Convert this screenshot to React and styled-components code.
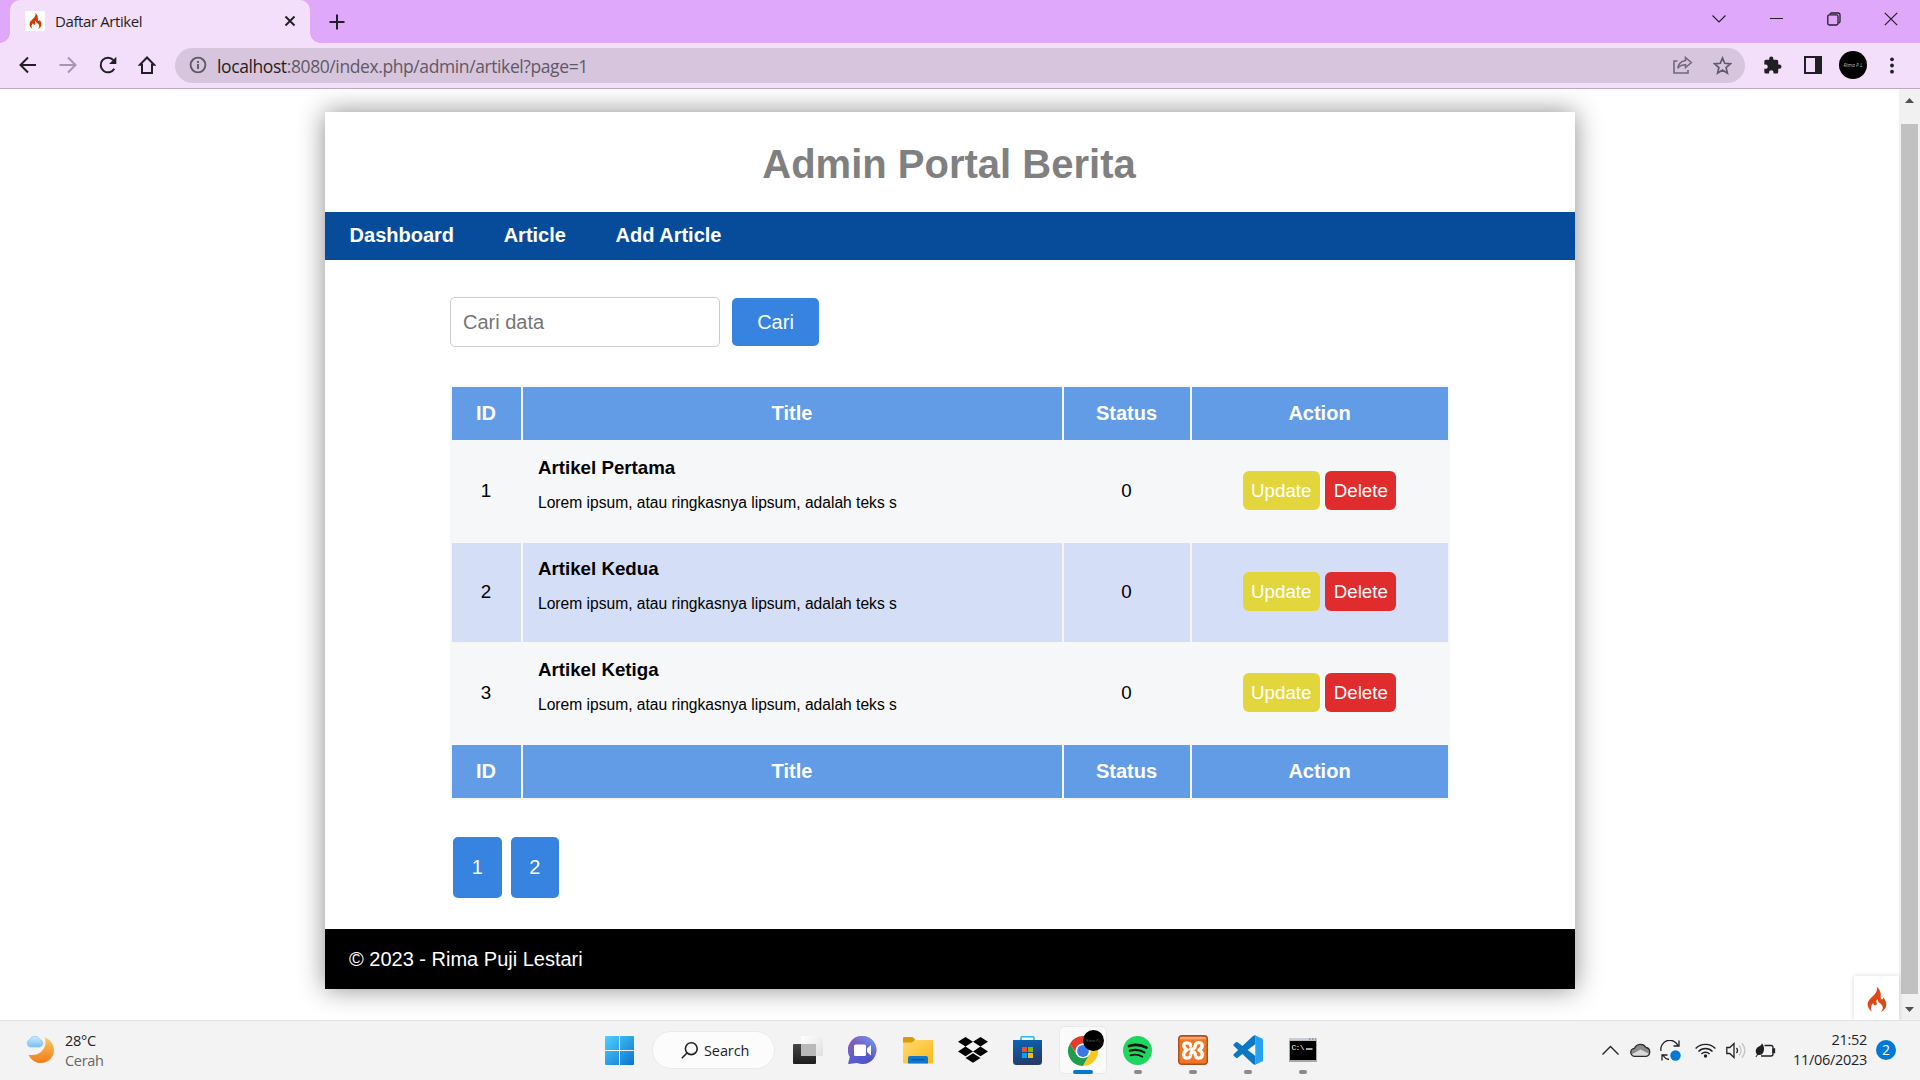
import React from "react";
import styled, { createGlobalStyle, css } from "styled-components";

const GlobalStyle = createGlobalStyle`
  * { box-sizing: border-box; }
  body { margin: 0; background: #fff; overflow: hidden; }
`;

const uiFont = `"Open Sans", "Noto Sans", sans-serif`;
const pageFont = `"Liberation Sans", Arial, sans-serif`;

const Screen = styled.div`
  width: 1920px;
  height: 1080px;
  display: flex;
  flex-direction: column;
  overflow: hidden;
  font-family: ${uiFont};
  color: #1f1f23;
`;

/* ---------- browser chrome ---------- */
const TabStrip = styled.div`
  height: 43px;
  flex: none;
  display: flex;
  align-items: stretch;
  background: #dfa8fb;
  padding-left: 10px;
`;

const Tab = styled.div`
  position: relative;
  width: 300px;
  background: #f3dffa;
  border-radius: 10px 10px 0 0;
  display: flex;
  align-items: center;
  padding: 0 11px 2px 15px;
  &::before, &::after {
    content: "";
    position: absolute;
    bottom: 0;
    width: 10px;
    height: 10px;
  }
  &::before { left: -10px; background: radial-gradient(circle at 0 0, transparent 9.5px, #f3dffa 10px); }
  &::after { right: -10px; background: radial-gradient(circle at 100% 0, transparent 9.5px, #f3dffa 10px); }
`;

const Favicon = styled.span`
  width: 20px;
  height: 20px;
  margin-right: 10px;
  background: #fff;
  display: grid;
  place-items: center;
`;

const TabTitle = styled.span`
  flex: 1;
  font-size: 15px;
  letter-spacing: -0.4px;
  line-height: 20px;
  white-space: nowrap;
`;

const Slot = styled.span`
  width: ${(p) => p.$w}px;
  flex: none;
  display: flex;
  align-items: center;
  justify-content: center;
  svg { display: block; }
`;

const Spacer = styled.div`flex: 1;`;

const WindowButtons = styled.div`
  display: flex;
  height: 37px;
  padding-right: 0.5px;
`;

const Toolbar = styled.div`
  height: 46px;
  flex: none;
  display: flex;
  align-items: center;
  background: #f3dffa;
  border-bottom: 1px solid #bcaac3;
  padding: 0 8px 1px 7px;
`;

const UrlBar = styled.div`
  width: 1570px;
  height: 35px;
  border-radius: 18px;
  background: #d7c5dd;
  display: flex;
  align-items: center;
  padding: 0 3px 0 11px;
`;

const UrlText = styled.span`
  flex: 1;
  margin-left: 8px;
  padding-top: 1px;
  font-size: 17.5px;
  letter-spacing: -0.4px;
  line-height: 24px;
  white-space: nowrap;
  color: #5f5965;
  b { font-weight: 400; color: #1f1f23; }
`;

const Avatar = styled.span`
  width: 28px;
  height: 28px;
  border-radius: 50%;
  background: #000;
  color: #bbb;
  display: grid;
  place-items: center;
  font: italic 5px ${uiFont};
`;

/* ---------- page ---------- */
const Viewport = styled.div`
  position: relative;
  height: 931px;
  flex: none;
  display: flex;
  background: #fff;
  overflow: hidden;
`;

const PageArea = styled.main`
  flex: 1;
  padding: 23px 324px 0 325px;
  font-family: ${pageFont};
  color: #000;
`;

const Container = styled.div`
  width: 1250px;
  height: 877px;
  display: flex;
  flex-direction: column;
  background: #fff;
  box-shadow: 0 0 25px rgba(0, 0, 0, 0.45);
`;

const Header = styled.header`
  height: 100px;
  padding: 4px 2px 0 0;
  text-align: center;
  h1 { margin: 0; font-size: 40px; line-height: 96px; color: #808080; }
`;

const Nav = styled.nav`
  height: 48px;
  background: #074c9b;
  display: flex;
  a {
    padding: 0 25px 0 24.6px;
    color: #fff;
    font-size: 20px;
    font-weight: 700;
    line-height: 46px;
  }
`;

const Content = styled.section`
  flex: 1;
  padding: 37px 125px 0;
`;

const SearchForm = styled.div`
  display: flex;
  align-items: center;
  gap: 12px;
  margin-bottom: 38px;
`;

const SearchInput = styled.input`
  width: 270px;
  height: 50px;
  padding: 0 12px;
  border: 1px solid #ccc;
  border-radius: 5px;
  font: 20px ${pageFont};
  &::placeholder { color: #757575; opacity: 1; }
`;

const blueButton = css`
  border: 0;
  border-radius: 5px;
  background: #3684e0;
  color: #fff;
  font: 20px ${pageFont};
`;

const SearchButton = styled.button`
  ${blueButton}
  width: 87px;
  height: 48px;
  padding: 0;
`;

const Table = styled.table`
  width: 1000px;
  table-layout: fixed;
  border-collapse: separate;
  border-spacing: 2px;
  background: #f5f7f9;
  th {
    height: 53px;
    padding: 0 1px 0 0;
    background: #629be6;
    color: #fff;
    font-size: 20px;
  }
  td {
    height: 99px;
    padding: 0 1px 2px 0;
    text-align: center;
    font-size: 18.75px;
  }
  tbody tr:nth-child(even) td { background: #d4def6; }
`;

const TitleCell = styled.td`
  && { text-align: left; padding: 0 15px 14px; }
  b { display: block; font-size: 18.72px; line-height: 22px; margin-bottom: 14px; }
  small { display: block; font-size: 15.6px; line-height: 20px; }
`;

const ActionLink = styled.a`
  display: inline-block;
  height: 39px;
  line-height: 39px;
  padding: 0 8.5px;
  border-radius: 6px;
  color: #fff;
  background: ${(p) => (p.$danger ? "#e02c2c" : "#e2d63c")};
`;

const Pager = styled.div`
  display: flex;
  gap: 9px;
  padding: 37px 3px 0;
`;

const PageLink = styled.a`
  ${blueButton}
  width: 48.5px;
  height: 61px;
  line-height: 61px;
  text-align: center;
`;

const Footer = styled.footer`
  height: 60px;
  padding-left: 24px;
  background: #000;
  color: #fff;
  font-size: 20px;
  line-height: 60px;
`;

const ScrollBar = styled.div`
  width: 21px;
  display: flex;
  flex-direction: column;
  align-items: center;
  padding: 9px 0 8px;
  background: #f1f1f1;
`;

const ScrollThumb = styled.div`
  width: 17px;
  height: 870px;
  margin-top: 21px;
  background: #c1c1c1;
`;

const DebugBadge = styled.div`
  position: absolute;
  right: 21px;
  bottom: 0;
  width: 45px;
  height: 44px;
  background: #fff;
  box-shadow: 0 0 5px rgba(0, 0, 0, 0.16);
  display: grid;
  place-items: center;
  padding-top: 2px;
  svg { display: block; }
`;

/* ---------- taskbar ---------- */
const Taskbar = styled.div`
  height: 60px;
  flex: none;
  display: flex;
  align-items: center;
  background: #f3f3f3;
  border-top: 1px solid #e3e3e3;
  padding-bottom: 1px;
  svg { display: block; }
`;

const Weather = styled.div`
  width: 592px;
  padding: 1px 0 0 25px;
  display: flex;
  align-items: center;
  gap: 9px;
`;

const SmallText = styled.div`
  font-size: 14.5px;
  line-height: 20px;
  letter-spacing: -0.3px;
  text-align: ${(p) => (p.$right ? "right" : "left")};
  span { color: #666; }
`;

const SearchPill = styled.div`
  width: 123px;
  height: 38px;
  margin: 0 5px;
  border-radius: 19px;
  border: 1px solid #ebebeb;
  background: #fcfcfc;
  display: flex;
  align-items: center;
  padding-left: 28px;
  gap: 6px;
  font-size: 14.5px;
  letter-spacing: -0.1px;
`;

const TaskbarItem = styled.div`
  width: 55px;
  height: 60px;
  display: flex;
  justify-content: center;
  align-items: center;
  position: relative;
  &::after {
    content: "";
    position: absolute;
    bottom: 6px;
    width: ${(p) => (p.$active ? 20 : p.$running ? 8 : 0)}px;
    height: 4px;
    border-radius: 2px;
    background: ${(p) => (p.$active ? "#0078d7" : "#8a8a8a")};
  }
`;

const ActiveTile = styled.div`
  width: 48px;
  height: 48px;
  border-radius: 5px;
  background: #fafafa;
  border: 1px solid #e9e9e9;
  display: grid;
  place-items: center;
`;

const Notification = styled.span`
  width: 20px;
  height: 20px;
  margin: 0 24px 0 9px;
  border-radius: 50%;
  background: #0078d7;
  color: #fff;
  font-size: 14px;
  line-height: 20px;
  text-align: center;
`;

/* ---------- drawings ---------- */
const Flame = ({ w, h, color = "#dd4814" }) => (
  <svg width={w} height={h} viewBox="0 0 20 26">
    <path fill={color} d="M9.600 0C10.800 2.400 9.800 5 7.600 7.600 4.400 11.200.300 13.600.300 18.200c0 3.400 2 6.200 5.200 7.400-1.100-1-1.900-2.200-1.900-3.900 0-2 1.300-3.400 2.300-5 .2 1.500 1.100 2.400 2.200 2.400 1.500 0 2.100-1.300 1.500-2.600-.6-1.500-.2-3 1-4-.1 2.300 1.200 3.200 2.900 4.700 1.500 1.300 2.500 2.600 2.500 4.500 0 1.700-.8 3-2.300 4 3.400-1 6-3.600 6-7.600 0-3.400-1.700-5.500-3.200-7.300.1 1.200-.4 2-1.300 2-1 0-1.500-.8-1.300-2.100C14.400 6.700 13.400 2.100 9.600 0z" />
  </svg>
);

const Line = ({ size = 16, w, h, d, stroke = "#202024", sw = 2, children }) => (
  <svg width={w || size} height={h || size} viewBox={`0 0 ${w || size} ${h || size}`} fill="none" stroke={stroke} strokeWidth={sw}>
    {d && <path d={d} />}
    {children}
  </svg>
);

const WindowsLogo = () => (
  <svg width="29" height="29" viewBox="0 0 29 29">
    <defs>
      <linearGradient id="win" x1="0" y1="0" x2="1" y2="1">
        <stop offset="0" stopColor="#4fd0fb" /><stop offset="1" stopColor="#0a74d0" />
      </linearGradient>
      <mask id="winm"><path fill="#fff" d="M0 1a1 1 0 0 1 1-1h13v14H0zM15 0h13a1 1 0 0 1 1 1v13H15zM0 15h14v14H1a1 1 0 0 1-1-1zM15 15h14v13a1 1 0 0 1-1 1H15z" /></mask>
    </defs>
    <rect width="29" height="29" fill="url(#win)" mask="url(#winm)" />
  </svg>
);

const TaskView = () => (
  <svg width="30" height="28" viewBox="0 0 30 28">
    <defs><linearGradient id="tv" x1="0" y1="0" x2="0" y2="1"><stop offset="0" stopColor="#474747" /><stop offset="1" stopColor="#1c1c1c" /></linearGradient>
      <linearGradient id="tv2" x1="0" y1="0" x2="1" y2="1"><stop offset="0" stopColor="#fff" /><stop offset="1" stopColor="#dfdfdf" /></linearGradient></defs>
    <rect y="8" width="23" height="20" rx="1" fill="url(#tv)" />
    <rect x="8" width="22" height="20" rx="1" fill="url(#tv2)" />
    <rect x="8" y="8" width="15" height="12" fill="#b9b9b9" />
  </svg>
);

const Chat = () => (
  <svg width="29" height="28" viewBox="0 0 29 28">
    <defs><linearGradient id="ct" x1="0" y1="0" x2="1" y2="1"><stop offset="0" stopColor="#9a5ea6" /><stop offset=".45" stopColor="#5f5ed0" /><stop offset="1" stopColor="#4a4fc4" /></linearGradient>
      <linearGradient id="ct2" x1="0" y1="1" x2="1" y2="0"><stop offset=".5" stopColor="#7a9ff0" stopOpacity="0" /><stop offset="1" stopColor="#7a9ff0" /></linearGradient></defs>
    <path fill="url(#ct)" d="M14.500 0a14 14 0 1 1-5.500 26.900L.8 28c-.6 0-.8-.5-.6-1l1.600-6A14 14 0 0 1 14.500 0z" />
    <path fill="url(#ct2)" d="M14.500 0a14 14 0 1 1-5.500 26.900L.8 28l1-7A14 14 0 0 1 14.500 0z" />
    <rect x="6" y="8.500" width="12" height="11.500" rx="1.500" fill="#fff" />
    <path fill="#fff" d="M19 12.500l4-3.500v10.500l-4-3.500z" />
  </svg>
);

const Folder = () => (
  <svg width="30" height="27" viewBox="0 0 30 27">
    <defs><linearGradient id="fo" x1="0" y1="0" x2="1" y2="1"><stop offset="0" stopColor="#ffdc72" /><stop offset="1" stopColor="#fcb714" /></linearGradient></defs>
    <path d="M0 1a1 1 0 0 1 1-1h8c1.500 0 3 2.500 4 4l-3 3H0z" fill="#dc9a07" />
    <path d="M0 5.500h9L12 3h17a1 1 0 0 1 1 1v21.500a1 1 0 0 1-1 1H1a1 1 0 0 1-1-1z" fill="url(#fo)" />
    <path d="M5 26.500V21a2 2 0 0 1 2-2h16a2 2 0 0 1 2 2v5.500z" fill="#1177cc" />
    <path d="M8.500 22.700h13" stroke="#0b4f96" strokeWidth="1.200" />
  </svg>
);

const Dropbox = () => (
  <svg width="30" height="26" viewBox="0 0 30 26">
    <path d="M7.500 0l7.500 4.800-7.500 4.800L0 4.800zM22.500 0L30 4.800l-7.500 4.800L15 4.800zM7.500 9.600l7.500 4.800-7.500 4.800L0 14.400zM22.500 9.600l7.500 4.800-7.500 4.800-7.500-4.800zM15 16.200l7.500 4.800L15 25.800 7.500 21z" fill="#000" />
  </svg>
);

const Store = () => (
  <svg width="29" height="29" viewBox="0 0 29 29">
    <defs><linearGradient id="st" x1="0" y1="0" x2="0.300" y2="1"><stop offset="0" stopColor="#0a66b8" /><stop offset="1" stopColor="#233b6e" /></linearGradient></defs>
    <path d="M8 6V1.800a1 1 0 0 1 1-1h11a1 1 0 0 1 1 1V6" fill="none" stroke="#2bb9ee" strokeWidth="1.600" />
    <path d="M0 4h29v21.500a3.500 3.500 0 0 1-3.500 3.500h-22A3.500 3.500 0 0 1 0 25.500z" fill="url(#st)" />
    <path d="M9 11h5v5H9z" fill="#f25022" /><path d="M15 11h5v5h-5z" fill="#7fba00" />
    <path d="M9 17h5v5H9z" fill="#00a4ef" /><path d="M15 17h5v5h-5z" fill="#ffb900" />
  </svg>
);

const Chrome = () => (
  <svg width="44" height="44" viewBox="0 0 44 44">
    <circle cx="22" cy="23" r="15" fill="#fff" />
    <path d="M9 15.500A15 15 0 0 0 22 38l6.500-11.300L22 30l-6.500-3.300z" fill="#1f9d4d" />
    <path d="M35 15.500A15 15 0 0 1 22 38l6.500-11.200A7.500 7.500 0 0 0 22 15.500z" fill="#fcc51c" />
    <path d="M9 15.500A15 15 0 0 1 35 15.500H22a7.500 7.500 0 0 0-6.500 11.200z" fill="#e33b2e" />
    <circle cx="22" cy="23" r="7.300" fill="#fff" />
    <circle cx="22" cy="23" r="5.900" fill="#3b78e7" />
    <circle cx="32.500" cy="12.500" r="10.500" fill="#000" />
    <text x="32.500" y="14" fontSize="4" fontStyle="italic" textAnchor="middle" fill="#666" fontFamily="Open Sans">Rima P.L</text>
  </svg>
);

const Spotify = () => (
  <svg width="29" height="29" viewBox="0 0 29 29" fill="none" stroke="#111" strokeLinecap="round">
    <circle cx="14.500" cy="14.500" r="14.500" fill="#1ed760" stroke="none" />
    <path d="M6 10c6-1.800 12.500-1.200 17.500 1.600" strokeWidth="2.700" />
    <path d="M6.700 14.800c5-1.500 10.400-.9 14.700 1.600" strokeWidth="2.200" />
    <path d="M7.400 19.300c4.300-1.200 8.400-.8 12 1.400" strokeWidth="1.800" />
  </svg>
);

const Xampp = () => (
  <svg width="30" height="30" viewBox="0 0 30 30">
    <rect x=".7" y=".7" width="28.600" height="28.600" rx="3" fill="#f27425" stroke="#a6521d" strokeWidth="1.400" />
    <path d="M2 4.200V3.400A1.400 1.400 0 0 1 3.400 2h23.200A1.400 1.400 0 0 1 28 3.400v.8z" fill="#f9a672" />
    <path
      d="M12.500 10.800c0-3.600-6.700-4.100-6.700-.3 0 2.300 1.500 3.500 3.200 4.500-2 1-3.300 2.500-3.300 4.700 0 4.300 6 4.600 6.800.8.300-2.600.8-3.500 2.500-3.500s2.200.9 2.500 3.500c.8 3.800 6.800 3.500 6.800-.8 0-2.200-1.300-3.700-3.300-4.700 1.700-1 3.200-2.200 3.200-4.500 0-4-6.700-3.800-6.900 0-.1 2.700-1.500 3.600-3.600 3.600h-1.500"
      fill="none" stroke="#fff" strokeWidth="3.300" strokeLinejoin="round" strokeLinecap="round"
    />
  </svg>
);

const VsCode = () => (
  <svg width="30" height="30" viewBox="0 0 30 30">
    <path d="M.9 10.900a1.300 1.300 0 0 1 0-1.900L2.900 7.200c.5-.4 1.200-.4 1.700 0L22.500 21v8.800L20 29z" fill="#0a78c4" />
    <path d="M.9 19.100a1.300 1.300 0 0 0 0 1.900l2 1.800c.5.400 1.200.4 1.700 0L22.500 9V.2L20 1z" fill="#0a78c4" />
    <path d="M20 29c.8.900 1.700 1 2.700.600l6.200-3c.7-.3 1.100-1 1.100-1.700V5.100c0-.7-.4-1.400-1.100-1.700l-6.200-3C21.700 0 20.800.100 20 1c.9-.8 2.300-.3 2.300 1v26c0 1.300-1.400 1.800-2.300 1z" fill="#27a2f2" />
  </svg>
);

const Terminal = () => (
  <svg width="30" height="26" viewBox="0 0 30 26">
    <rect x="1" y="1" width="28" height="24" fill="#a6a6a6" />
    <rect x="1" y="1" width="28" height="2.500" fill="#c9ced4" />
    <path d="M21 2h1.500M24 2h1.500M27 2h1" stroke="#7a8ba5" strokeWidth="1.500" />
    <rect x="2" y="4" width="26" height="19" fill="#000" />
    <text x="3.500" y="12.500" fontSize="8" fontFamily="Liberation Mono, monospace" fill="#fff" textLength="13">C:\</text>
    <path d="M18 12h6.500" stroke="#fff" strokeWidth="1.300" />
  </svg>
);

const Moon = () => (
  <svg width="31" height="31" viewBox="0 0 31 31">
    <defs><linearGradient id="mo" x1="0" y1="0" x2="0" y2="1"><stop offset="0" stopColor="#f8cb62" /><stop offset="1" stopColor="#f07c1c" /></linearGradient>
      <linearGradient id="cl" x1="0" y1="0" x2="0" y2="1"><stop offset="0" stopColor="#c9ecff" /><stop offset="1" stopColor="#7cbcf5" /></linearGradient></defs>
    <path d="M19.800 2.500c5.300 2 9.200 6.500 9.200 12.500A13 13 0 0 1 16 28c-5.500 0-10.400-3.300-12.500-8.300 5 .6 9.500 0 13-3.200 3.700-3.500 5-9 3.300-14z" fill="url(#mo)" />
    <path d="M5 12a4 4 0 0 1-.3-7.500A5.800 5.800 0 0 1 15 4.500a3.900 3.900 0 0 1-.2 7.500z" fill="url(#cl)" stroke="#90c8f6" strokeWidth=".8" />
  </svg>
);

const Cloud = () => (
  <svg width="21" height="16" viewBox="0 0 21 16">
    <path d="M5 14.300a4 4 0 0 1-.5-8A6.500 6.500 0 0 1 16 5.500a4.500 4.500 0 0 1 .3 8.800z" fill="#8b8b8b" />
    <path d="M1.500 12.500l9-5 9 4.500c-.8 1.500-2 2.300-3.200 2.300H5c-1.500 0-2.700-.6-3.500-1.800z" fill="#dadada" />
    <path d="M5 14.300a4 4 0 0 1-.5-8A6.500 6.500 0 0 1 16 5.500a4.500 4.500 0 0 1 .3 8.800z" fill="none" stroke="#2b2b2b" strokeWidth="1.300" />
  </svg>
);

const articles = [
  { id: 1, title: "Artikel Pertama" },
  { id: 2, title: "Artikel Kedua" },
  { id: 3, title: "Artikel Ketiga" },
];

const HeadRow = () => (
  <tr><th>ID</th><th>Title</th><th>Status</th><th>Action</th></tr>
);

function BrowserChrome() {
  return (
    <>
      <TabStrip>
        <Tab>
          <Favicon><Flame w={13} h={16} color="#cc3d05" /></Favicon>
          <TabTitle>Daftar Artikel</TabTitle>
          <Slot $w={18}><Line size={12} d="M1.500 1.500l9 9M10.500 1.500l-9 9" sw={1.900} /></Slot>
        </Tab>
        <Slot $w={54}><Line size={16} d="M8 .5v15M.5 8h15" sw={2} /></Slot>
        <Spacer />
        <WindowButtons>
          <Slot $w={57}><Line w={14} h={8} d="M.5.500L7 7l6.500-6.500" sw={1.100} /></Slot>
          <Slot $w={57}><Line w={13} h={1} d="M0 .5h13" sw={1.400} /></Slot>
          <Slot $w={58}><Line size={14} sw={1.300}><rect x=".8" y="2.800" width="10.200" height="10.200" rx="1.500" /><path d="M3 2.500C3 1.500 3.500 1 4.500 1H11a2 2 0 0 1 2 2v6.500a1.500 1.500 0 0 1-1.500 1.500" /></Line></Slot>
          <Slot $w={57}><Line size={14} d="M.8.800l12.400 12.400M13.200.800L.8 13.200" sw={1.200} /></Slot>
        </WindowButtons>
      </TabStrip>
      <Toolbar>
        <Slot $w={41}><Line size={18} d="M17 9H2M9 1.500L1.500 9 9 16.500" /></Slot>
        <Slot $w={40}><Line size={18} d="M.5 9H16M9 1.500L16.500 9 9 16.500" stroke="#a993b1" /></Slot>
        <Slot $w={39}>
          <Line size={20}><path d="M16.300 13.700A7.300 7.300 0 1 1 15.300 5" /><path d="M18.300 1.800v7.200h-7.200z" fill="#202024" stroke="none" /></Line>
        </Slot>
        <Slot $w={40}><Line size={18} d="M4 17V8.800H1.800L9 1.500l7.200 7.300H14V17z" sw={2} /></Slot>
        <Slot $w={8} />
        <UrlBar>
          <Slot $w={23}><Line size={18} stroke="#605a66" sw={1.900}><circle cx="9" cy="9" r="7.400" /><path d="M9 8v5M9 5v2" /></Line></Slot>
          <UrlText><b>localhost</b>:8080/index.php/admin/artikel?page=1</UrlText>
          <Slot $w={39}>
            <Line w={20} h={18} stroke="#716878" sw={1.600} d="M4.500 5H1v12h14v-3M12.500 1.500l5.800 5-5.800 5V8.700C9 8.700 6.500 9.700 4.800 12.300 5.300 8.500 7.700 5.200 12.500 4.500z" />
          </Slot>
          <Slot $w={40}>
            <Line size={19} stroke="#625b69" sw={1.700} d="M9.500 2l2.200 5.300 5.700.5-4.300 3.700 1.300 5.600-4.900-3-4.900 3 1.300-5.600L1.600 7.800l5.700-.5z" />
          </Slot>
        </UrlBar>
        <Slot $w={7} />
        <Slot $w={41}>
          <svg width="19" height="18" viewBox="1.500 0.500 21 22"><path fill="#202024" d="M20.500 11H19V7a2 2 0 0 0-2-2h-4V3.500a2.500 2.500 0 0 0-5 0V5H4a2 2 0 0 0-2 2v3.800h1.500a2.700 2.700 0 0 1 0 5.400H2V20a2 2 0 0 0 2 2h3.800v-1.500a2.700 2.700 0 0 1 5.400 0V22H17a2 2 0 0 0 2-2v-4h1.500a2.500 2.500 0 0 0 0-5z" /></svg>
        </Slot>
        <Slot $w={39}><Line size={18}><rect x="1" y="1" width="16" height="16" /><path d="M12 1h5v16h-5z" fill="#202024" /></Line></Slot>
        <Slot $w={42}><Avatar>Rima P.L</Avatar></Slot>
        <Slot $w={36}><svg width="4" height="17"><g fill="#202024"><circle cx="2" cy="2.300" r="1.900" /><circle cx="2" cy="8.500" r="1.900" /><circle cx="2" cy="14.700" r="1.900" /></g></svg></Slot>
      </Toolbar>
    </>
  );
}

function Page() {
  return (
    <Viewport>
      <PageArea>
        <Container>
          <Header><h1>Admin Portal Berita</h1></Header>
          <Nav><a>Dashboard</a><a>Article</a><a>Add Article</a></Nav>
          <Content>
            <SearchForm>
              <SearchInput placeholder="Cari data" />
              <SearchButton>Cari</SearchButton>
            </SearchForm>
            <Table>
              <colgroup>
                <col width="69" /><col width="539" /><col width="126" /><col width="256" />
              </colgroup>
              <thead><HeadRow /></thead>
              <tbody>
                {articles.map((a) => (
                  <tr key={a.id}>
                    <td>{a.id}</td>
                    <TitleCell>
                      <b>{a.title}</b>
                      <small>Lorem ipsum, atau ringkasnya lipsum, adalah teks s</small>
                    </TitleCell>
                    <td>0</td>
                    <td><ActionLink>Update</ActionLink> <ActionLink $danger>Delete</ActionLink></td>
                  </tr>
                ))}
              </tbody>
              <tfoot><HeadRow /></tfoot>
            </Table>
            <Pager><PageLink>1</PageLink><PageLink>2</PageLink></Pager>
          </Content>
          <Footer>© 2023 - Rima Puji Lestari</Footer>
        </Container>
      </PageArea>
      <ScrollBar>
        <svg width="9" height="5"><path d="M0 5L4.500 0 9 5z" fill="#505050" /></svg>
        <ScrollThumb />
        <Spacer />
        <svg width="9" height="5"><path d="M0 0L4.500 5 9 0z" fill="#505050" /></svg>
      </ScrollBar>
      <DebugBadge><Flame w={20} h={25} /></DebugBadge>
    </Viewport>
  );
}

function WindowsTaskbar() {
  return (
    <Taskbar>
      <Weather>
        <Moon />
        <SmallText>28°C<br /><span>Cerah</span></SmallText>
      </Weather>
      <TaskbarItem><WindowsLogo /></TaskbarItem>
      <SearchPill>
        <Line size={17} sw={1.600}><circle cx="10.300" cy="6.700" r="5.900" /><path d="M6.200 10.800L.8 16.200" /></Line>
        Search
      </SearchPill>
      <TaskbarItem><TaskView /></TaskbarItem>
      <TaskbarItem><Chat /></TaskbarItem>
      <TaskbarItem><Folder /></TaskbarItem>
      <TaskbarItem><Dropbox /></TaskbarItem>
      <TaskbarItem><Store /></TaskbarItem>
      <TaskbarItem $active><ActiveTile><Chrome /></ActiveTile></TaskbarItem>
      <TaskbarItem $running><Spotify /></TaskbarItem>
      <TaskbarItem $running><Xampp /></TaskbarItem>
      <TaskbarItem $running><VsCode /></TaskbarItem>
      <TaskbarItem $running><Terminal /></TaskbarItem>
      <Spacer />
      <Slot $w={30}><Line w={17} h={10} d="M.5 9.500l8-8 8 8" sw={1.300} /></Slot>
      <Slot $w={30}><Cloud /></Slot>
      <Slot $w={30}>
        <Line size={21} sw={1.300}><path d="M1 11A9 9 0 0 1 18 5.500M19 .5v5.500h-5.500M2 20.500v-5.500h5.500M3 15.500c1.500 2.500 3.500 3.500 6 4" /><circle cx="15.500" cy="15.500" r="5.200" fill="#0078d7" stroke="none" /></Line>
      </Slot>
      <Slot $w={5} />
      <Slot $w={30}>
        <Line w={21} h={15} sw={1.400}><path d="M.6 5.500a14 14 0 0 1 19.800 0M3.500 8.400a9.800 9.800 0 0 1 14 0M6.400 11a5.800 5.800 0 0 1 8.200 0" /><circle cx="10.500" cy="13" r="1.700" fill="#202024" stroke="none" /></Line>
      </Slot>
      <Slot $w={30}>
        <Line w={20} h={17} sw={1.300}><path d="M.8 5.500h3L8 1.500v14l-4.200-4h-3zM10.500 6a4 4 0 0 1 0 5" /><path d="M13 3.500a7 7 0 0 1 0 10M15.800 1.200a10.500 10.500 0 0 1 0 14.600" stroke="#c4c4c4" /></Line>
      </Slot>
      <Slot $w={30}>
        <Line w={21} h={15} sw={1.300}><path d="M9.500 2.500h6.500a2 2 0 0 1 2 2v6.500a2 2 0 0 1-2 2H6" /><path d="M18 6h1.500v3.500H18z" fill="#202024" /><path d="M7 .3C9.500 3 10 8.500 7 11.300c-1.500 1-3 .8-4 .5L1.300 14.300l-.8-.5 1.500-2.300C.2 9 .3 6 3 4 5 2.800 6.500 2.300 7 .3z" fill="#202024" stroke="none" /></Line>
      </Slot>
      <Slot $w={86.500}>
        <Spacer />
        <SmallText $right>21:52<br />11/06/2023</SmallText>
      </Slot>
      <Notification>2</Notification>
    </Taskbar>
  );
}

export default function App() {
  return (
    <Screen>
      <GlobalStyle />
      <BrowserChrome />
      <Page />
      <WindowsTaskbar />
    </Screen>
  );
}
